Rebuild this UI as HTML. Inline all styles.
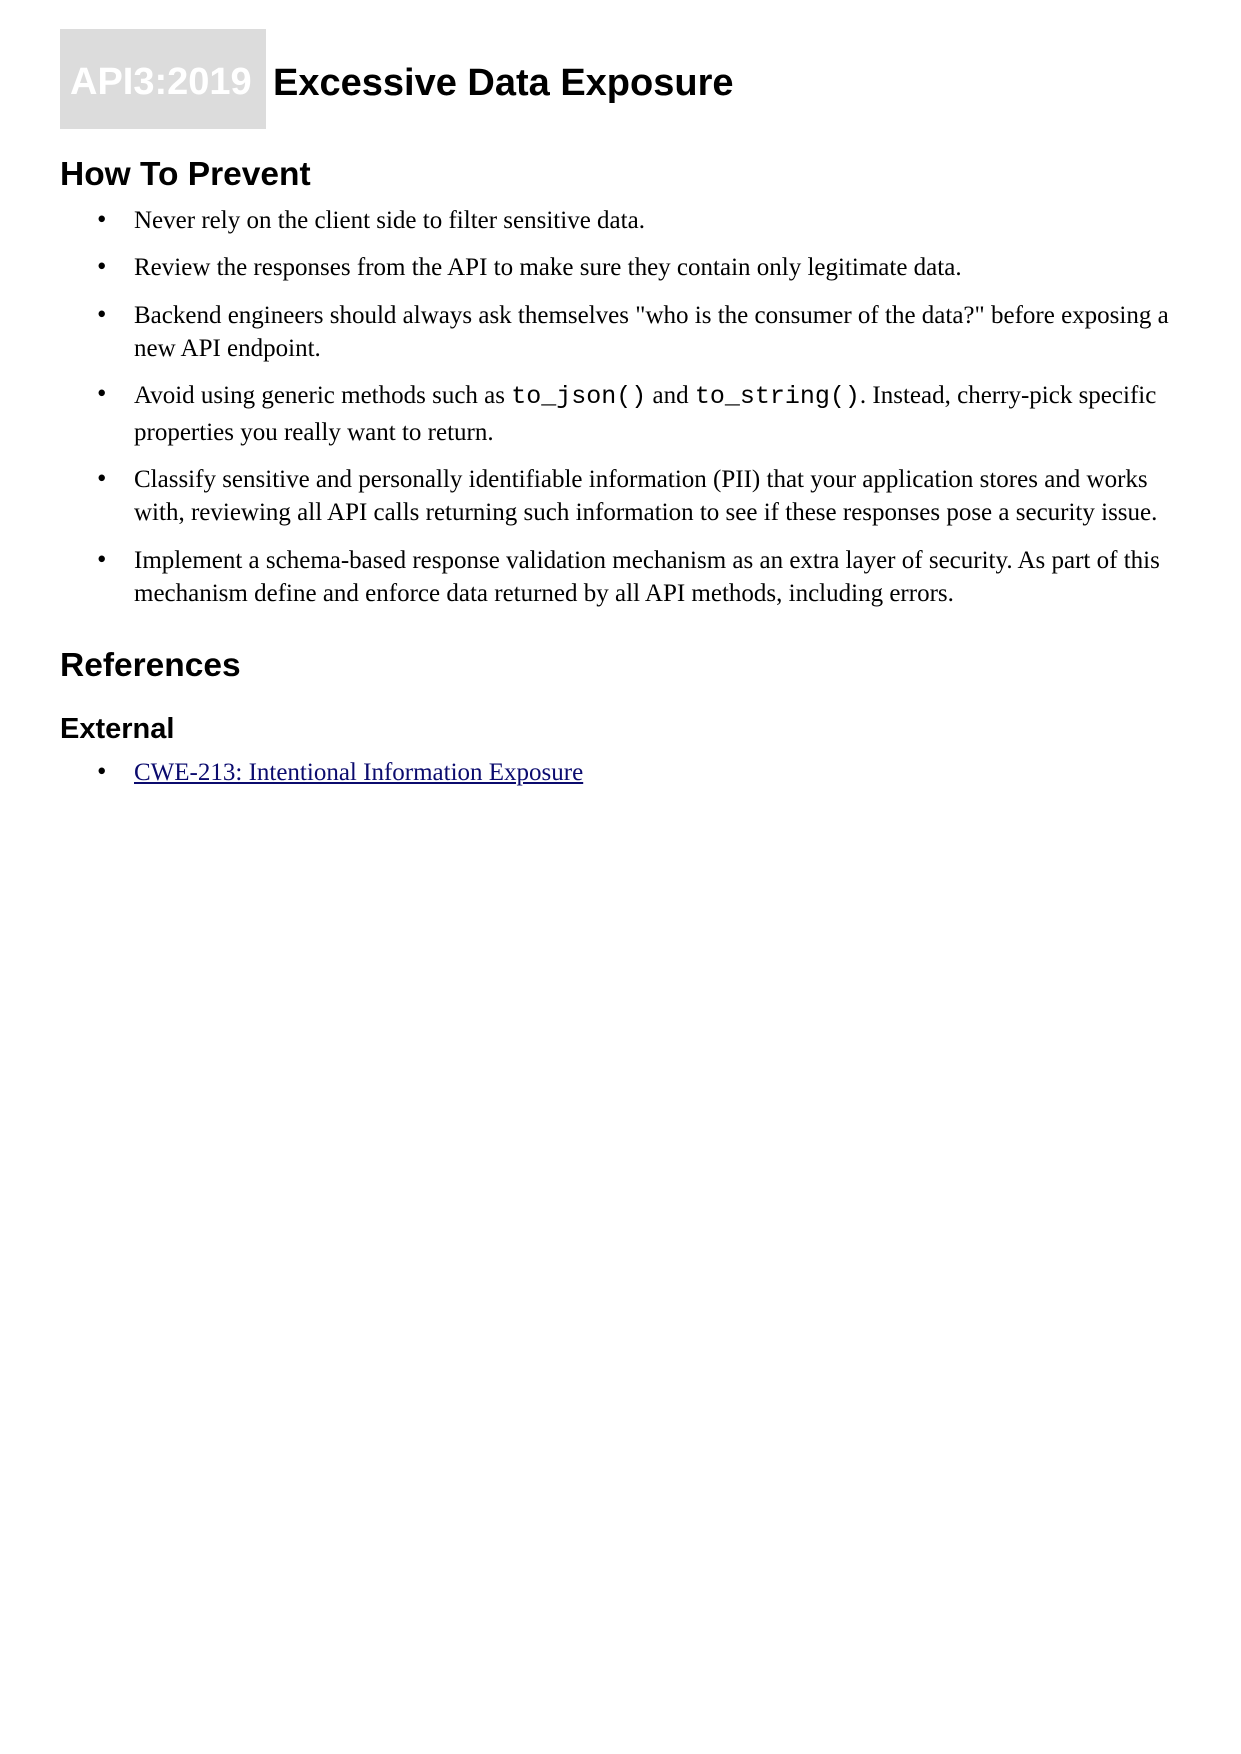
<!DOCTYPE html>
<html><head><meta charset="utf-8"><style>
html,body{margin:0;padding:0;background:#fff;width:1241px;height:1754px;overflow:hidden;position:relative}
.a{position:absolute;white-space:nowrap}
.h{font-family:"Liberation Sans",sans-serif;font-weight:bold;color:#000}
.t{font-family:"Liberation Serif",serif;font-size:25px;color:#000;left:134px;line-height:33px}
.b{font-family:"Liberation Serif",serif;font-size:27px;left:97px;line-height:33px}
code{font-family:"Liberation Mono",monospace;font-size:25px}
a{color:#0b0b6e;text-decoration:underline}
</style></head><body>
<div class="a" style="left:60px;top:29px;width:206px;height:100px;background:#dcdcdc"></div>
<div class="a h" style="left:70px;top:58px;font-size:38px;line-height:48px;color:#fff">API3:2019</div>
<div class="a h" style="left:273px;top:59px;font-size:38px;line-height:48px">Excessive Data Exposure</div>
<div class="a h" style="left:60px;top:155px;font-size:33.5px;line-height:40px">How To Prevent</div>

<div class="a b" style="top:203px">•</div>
<div class="a t" style="top:204px">Never rely on the client side to filter sensitive data.</div>
<div class="a b" style="top:250px">•</div>
<div class="a t" style="top:251px">Review the responses from the API to make sure they contain only legitimate data.</div>
<div class="a b" style="top:298px">•</div>
<div class="a t" style="top:299px">Backend engineers should always ask themselves "who is the consumer of the data?" before exposing a<br>new API endpoint.</div>
<div class="a b" style="top:377px">•</div>
<div class="a t" style="top:378px;line-height:36px">Avoid using generic methods such as <code>to_json()</code> and <code>to_string()</code>. Instead, cherry-pick specific<br>properties you really want to return.</div>
<div class="a b" style="top:462px">•</div>
<div class="a t" style="top:463px">Classify sensitive and personally identifiable information (PII) that your application stores and works<br>with, reviewing all API calls returning such information to see if these responses pose a security issue.</div>
<div class="a b" style="top:543px">•</div>
<div class="a t" style="top:544px">Implement a schema-based response validation mechanism as an extra layer of security. As part of this<br>mechanism define and enforce data returned by all API methods, including errors.</div>

<div class="a h" style="left:60px;top:646px;font-size:33.5px;line-height:40px">References</div>
<div class="a h" style="left:60px;top:712px;font-size:29px;line-height:34px">External</div>
<div class="a b" style="top:755px">•</div>
<div class="a t" style="top:756px"><a>CWE-213: Intentional Information Exposure</a></div>
</body></html>
